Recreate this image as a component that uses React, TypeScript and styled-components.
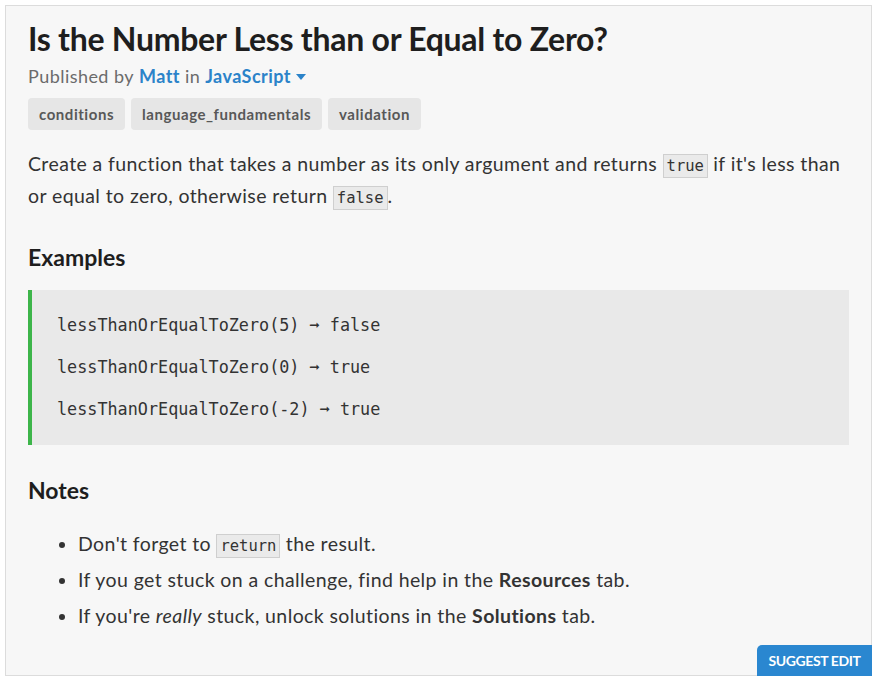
import React from "react";
import styled, { createGlobalStyle } from "styled-components";

const Global = createGlobalStyle`
  html, body { margin: 0; padding: 0; background: #ffffff; }
  body { font-family: Lato, "Noto Sans", sans-serif; color: #333; }
`;

const Page = styled.div`
  padding: 5px 3px 2px 5px;
`;

const Card = styled.article`
  box-sizing: border-box;
  height: 671px;
  background: #f7f7f7;
  border: 1px solid #dcdcdc;
  padding: 14px 22px 0 22px;
  display: flex;
  flex-direction: column;
`;

const Title = styled.h1`
  margin: 0;
  font-size: 32px;
  line-height: 38px;
  font-weight: 700;
  letter-spacing: -0.27px;
  color: #1e1e1e;
`;

const Meta = styled.div`
  margin-top: 6px;
  font-size: 18px;
  line-height: 24px;
  letter-spacing: 0.45px;
  color: #6b6b6b;
  display: flex;
  align-items: center;
  gap: 5px;
`;

const Link = styled.a`
  color: #2b83c9;
  font-weight: 700;
  text-decoration: none;
`;

const Caret = styled.span`
  display: inline-block;
  width: 0;
  height: 0;
  border-left: 5px solid transparent;
  border-right: 5px solid transparent;
  border-top: 6px solid #2b83c9;
  margin-left: 0;
  margin-top: 2px;
`;

const Tags = styled.div`
  margin-top: 10px;
  display: flex;
  gap: 6px;
`;

const Tag = styled.span`
  height: 32px;
  display: inline-flex;
  align-items: center;
  padding: 0 11px;
  background: #e6e6e6;
  border-radius: 4px;
  font-size: 15px;
  font-weight: 700;
  letter-spacing: 0.55px;
  color: #585858;
`;

const Para = styled.p`
  margin: 18px 0 0;
  font-size: 19.5px;
  line-height: 32px;
  letter-spacing: 0.4px;
  color: #333;
`;

const Code = styled.code`
  font-family: "DejaVu Sans Mono", "Liberation Mono", monospace;
  font-size: 15.5px;
  line-height: 1;
  letter-spacing: 0;
  background: #eaeaea;
  border: 1px solid #cfcfcf;
  padding: 2px 3px;
  color: #333;
`;

const Heading = styled.h2`
  margin: 30px 0 0;
  font-size: 23px;
  line-height: 30px;
  font-weight: 700;
  color: #1e1e1e;
`;

const Example = styled.pre`
  margin: 18px 0 0;
  background: #e9e9e9;
  border-left: 4px solid #3db54a;
  padding: 14px 25px 15px;
  font-family: "DejaVu Sans Mono", "Liberation Mono", monospace;
  font-size: 16.8px;
  line-height: 42px;
  color: #333;
`;

const ExampleLine = styled.div``;

const List = styled.ul`
  margin: 21px 0 0;
  padding-left: 50px;
  font-size: 19.5px;
  line-height: 36px;
  letter-spacing: 0.4px;
  color: #333;
`;

const Item = styled.li``;

const Footer = styled.div`
  margin-top: auto;
  margin-right: -23px;
  margin-bottom: -1px;
  display: flex;
  justify-content: flex-end;
`;

const SuggestButton = styled.button`
  height: 31px;
  width: 115px;
  padding: 0;
  border: none;
  border-radius: 5px 0 0 0;
  background: #2a87d0;
  color: #fff;
  font-family: Lato, sans-serif;
  font-weight: 700;
  font-size: 14px;
  letter-spacing: -0.4px;
  text-transform: uppercase;
  cursor: pointer;
`;

export default function App() {
  return (
    <Page>
      <Global />
      <Card>
        <Title>Is the Number Less than or Equal to Zero?</Title>
        <Meta>
          <span>Published by</span>
          <Link href="#">Matt</Link>
          <span>in</span>
          <Link href="#">JavaScript</Link>
          <Caret />
        </Meta>
        <Tags>
          <Tag>conditions</Tag>
          <Tag>language_fundamentals</Tag>
          <Tag>validation</Tag>
        </Tags>
        <Para>
          Create a function that takes a number as its only argument and returns <Code>true</Code> if it's less than or
          equal to zero, otherwise return <Code>false</Code>.
        </Para>
        <Heading>Examples</Heading>
        <Example>
          <ExampleLine>lessThanOrEqualToZero(5) ➞ false</ExampleLine>
          <ExampleLine>lessThanOrEqualToZero(0) ➞ true</ExampleLine>
          <ExampleLine>lessThanOrEqualToZero(-2) ➞ true</ExampleLine>
        </Example>
        <Heading>Notes</Heading>
        <List>
          <Item>
            Don't forget to <Code>return</Code> the result.
          </Item>
          <Item>
            If you get stuck on a challenge, find help in the <b>Resources</b> tab.
          </Item>
          <Item>
            If you're <i>really</i> stuck, unlock solutions in the <b>Solutions</b> tab.
          </Item>
        </List>
        <Footer>
          <SuggestButton>Suggest Edit</SuggestButton>
        </Footer>
      </Card>
    </Page>
  );
}
